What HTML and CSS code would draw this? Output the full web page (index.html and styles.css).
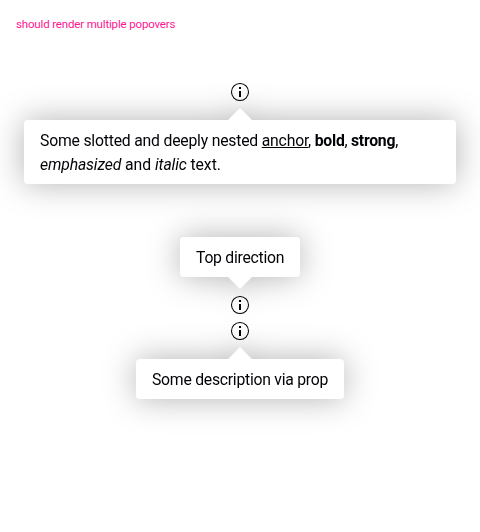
FILE: index.html
```html
<!DOCTYPE html>
<html lang="en">
<head>
<meta charset="utf-8">
<title>Popovers</title>
<link rel="stylesheet" href="styles.css">
</head>
<body>
<svg width="0" height="0" class="defs" aria-hidden="true">
  <symbol id="info" viewBox="0 0 24 24">
    <circle cx="12" cy="12" r="8.5" fill="none" stroke="currentColor" stroke-width="1.05"/>
    <path d="M11 7h2v2h-2zM11 11h2v6h-2z" fill="currentColor"/>
  </symbol>
</svg>
<h1 class="title">should render multiple popovers</h1>
<main class="list">
  <div class="item item-first">
    <svg class="icon"><use href="#info"/></svg>
    <div class="popover bottom rich"><p class="text"><span class="lead">Some slotted and deeply nested <a class="anchor">anchor</a>, </span><span class="tail"><b>bold</b>, <strong>strong</strong>,</span> <span class="second"><em>emphasized</em> and <i>italic</i> text.</span></p></div>
  </div>
  <div class="item item-second">
    <svg class="icon"><use href="#info"/></svg>
    <div class="popover top direction"><p class="text">Top direction</p></div>
  </div>
  <div class="item">
    <svg class="icon"><use href="#info"/></svg>
    <div class="popover bottom description"><p class="text">Some description via prop</p></div>
  </div>
</main>
</body>
</html>
```
FILE: styles.css
```css
* { box-sizing: border-box; }
body {
  margin: 0;
  padding: 16px;
  height: 532px;
  overflow: hidden;
  background: #fff;
  color: #010205;
  font-family: Roboto, "Liberation Sans", sans-serif;
}
.defs { position: absolute; }
.title {
  margin: 0;
  font-size: 11.5px;
  font-weight: 400;
  line-height: 16px;
  letter-spacing: -0.16px;
  color: #ff1493;
}
.list {
  display: flex;
  flex-direction: column;
  align-items: center;
  padding-top: 48px;
}
.item { position: relative; width: 24px; height: 24px; }
.item-first { margin-bottom: 189px; }
.item-second { margin-bottom: 2px; }
.icon { display: block; width: 24px; height: 24px; }
.popover {
  position: absolute;
  left: 50%;
  transform: translateX(-50%);
  padding: 9px 16px 7px;
  border-radius: 4px;
  background: #fff;
  filter: drop-shadow(0 0 16px rgba(0, 0, 0, 0.3));
}
.popover::before {
  content: "";
  position: absolute;
  left: calc(50% - 12px);
  border: 12px solid transparent;
}
.bottom { top: 40px; }
.bottom::before { bottom: 100%; border-top: 0; border-bottom-color: #fff; }
.top { bottom: 40px; }
.top::before { top: 100%; border-bottom: 0; border-top-color: #fff; }
.rich { width: 432px; }
.direction { width: 120px; }
.description { width: 208px; }
.text {
  margin: 0;
  font-size: 15.75px;
  line-height: 24px;
  white-space: nowrap;
  letter-spacing: -0.25px;
}
.lead { letter-spacing: -0.2px; }
.second { display: block; letter-spacing: -0.04px; }
.second em, .second i { letter-spacing: -0.14px; }
.anchor { text-decoration: underline; text-underline-offset: 1px; text-decoration-thickness: 1px; }
```
